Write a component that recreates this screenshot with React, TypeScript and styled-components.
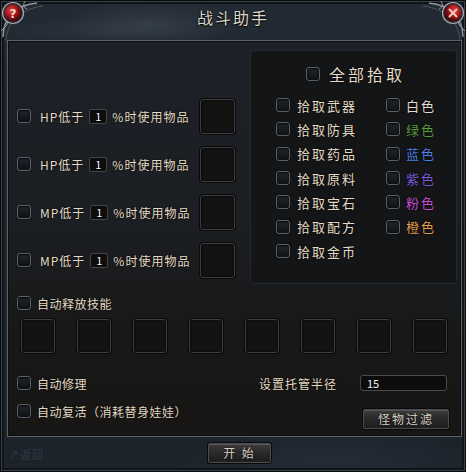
import { FC } from 'react';
import styled, { createGlobalStyle } from 'styled-components';

const GlobalStyle = createGlobalStyle`
  html, body {
    margin: 0;
    padding: 0;
    background: #0b0d10;
  }
  body {
    font-family: "Noto Sans CJK SC", "DejaVu Sans", sans-serif;
  }
`;

const TEXT = '#e4dac4';

const Styled = {
  Window: styled.div`
    position: relative;
    width: 466px;
    height: 472px;
    box-sizing: border-box;
    overflow: hidden;
    display: flex;
    flex-flow: column nowrap;
    background:
      radial-gradient(ellipse 90px 22px at 150px 22px, rgba(120, 135, 150, 0.18), transparent),
      radial-gradient(ellipse 120px 14px at 110px 30px, rgba(120, 135, 150, 0.1), transparent),
      radial-gradient(ellipse 160px 30px at 330px 460px, rgba(90, 105, 125, 0.12), transparent),
      linear-gradient(180deg, #222a33 0%, #1d242c 40%, #1c232b 100%);
    border: 1px solid #07090b;
    box-shadow: inset 0 0 0 1px #38404a, inset 0 0 0 3px #11151a;
  `,
  TitleBar: styled.div`
    height: 39px;
    display: flex;
    justify-content: center;
    align-items: flex-start;
    padding-top: 6px;
    box-sizing: border-box;
  `,
  Title: styled.h1`
    margin: 0;
    font-size: 16px;
    font-weight: normal;
    letter-spacing: 2px;
    color: #ddd6c8;
    line-height: 20px;
    text-shadow: 0 0 2px #000, 0 1px 1px #000;
  `,
  Corner: styled.div<{ side: 'left' | 'right' }>`
    position: absolute;
    top: 0;
    ${({ side }) => (side === 'left' ? 'left: 0;' : 'right: 0; transform: scaleX(-1);')}
    width: 44px;
    height: 44px;
    pointer-events: none;
  `,
  Panel: styled.div`
    margin: 0 3px 0 6px;
    height: 397px;
    box-sizing: border-box;
    border: 1px solid #5c636b;
    box-shadow: inset 0 0 0 1px #0c0e10;
    background: linear-gradient(180deg, #1d2229 0%, #1b1e22 45%, #181818 75%, #171615 100%);
    padding: 9px 4px 0 9px;
    display: flex;
    flex-flow: column nowrap;
  `,
  Top: styled.div`
    display: flex;
    justify-content: space-between;
    height: 234px;
  `,
  LeftCol: styled.div`
    width: 218px;
    padding-top: 42px;
    display: flex;
    flex-flow: column nowrap;
  `,
  PotionRow: styled.div`
    height: 48px;
    display: flex;
    align-items: center;
    font-size: 12px;
    letter-spacing: 1px;
    color: ${TEXT};
    text-shadow: 0 0 2px #000;
  `,
  Label: styled.span<{ gap?: number }>`
    margin-left: ${({ gap }) => gap ?? 0}px;
    white-space: nowrap;
  `,
  Check: styled.span`
    flex: none;
    width: 14px;
    height: 14px;
    box-sizing: border-box;
    border-radius: 3px;
    border: 1px solid #58606a;
    background: linear-gradient(180deg, #22272d 0%, #0f1114 100%);
    box-shadow: inset 0 1px 2px rgba(0, 0, 0, 0.9), 0 0 1px #000;
  `,
  NumBox: styled.span<{ width: number }>`
    width: ${({ width }) => width}px;
    height: 15px;
    box-sizing: border-box;
    margin-left: 5px;
    border: 1px solid #454545;
    border-radius: 2px;
    background: #0d0d0d;
    color: #f2f2f2;
    font-size: 11px;
    letter-spacing: 0;
    line-height: 13px;
    text-align: center;
  `,
  Slot: styled.span<{ size: number }>`
    flex: none;
    width: ${({ size }) => size}px;
    height: ${({ size }) => size}px;
    box-sizing: border-box;
    border: 1px solid #3e3d3b;
    border-radius: 3px;
    background: #131313;
    box-shadow: 0 0 0 1px #0a0a0a, inset 0 0 3px rgba(0, 0, 0, 0.8);
  `,
  PotionSlot: styled.span`
    margin-left: auto;
    display: flex;
  `,
  PickPanel: styled.div`
    width: 207px;
    box-sizing: border-box;
    border: 1px solid #25282c;
    border-radius: 4px;
    background: #141517;
    padding: 14px 0 0 25px;
    display: flex;
    flex-flow: column nowrap;
  `,
  PickAll: styled.div`
    display: flex;
    align-items: center;
    height: 18px;
    margin-left: 30px;
    font-size: 16px;
    letter-spacing: 3px;
    color: ${TEXT};
    text-shadow: 0 0 2px #000;
  `,
  PickGrid: styled.div`
    margin-top: 10px;
    display: grid;
    grid-template-columns: 110px auto;
    grid-auto-rows: 24.33px;
    align-items: center;
  `,
  PickItem: styled.div<{ color?: string }>`
    display: flex;
    align-items: center;
    font-size: 13px;
    letter-spacing: 2px;
    color: ${({ color }) => color ?? TEXT};
    text-shadow: 0 0 2px #000;
  `,
  SkillToggle: styled.div`
    margin-top: 12px;
    display: flex;
    align-items: center;
    height: 14px;
    font-size: 12px;
    letter-spacing: 0.5px;
    color: ${TEXT};
    text-shadow: 0 0 2px #000;
  `,
  SkillRow: styled.div`
    margin-top: 9px;
    padding-left: 4px;
    display: flex;
    gap: 22px;
  `,
  Bottom: styled.div`
    margin-top: 22px;
    display: flex;
    justify-content: space-between;
    padding-right: 8px;
  `,
  OptionCol: styled.div`
    display: flex;
    flex-flow: column nowrap;
    gap: 12px;
  `,
  Option: styled.div`
    display: flex;
    align-items: center;
    height: 16px;
    font-size: 12px;
    letter-spacing: 0.5px;
    color: ${TEXT};
    text-shadow: 0 0 2px #000;
  `,
  RadiusCol: styled.div`
    display: flex;
    flex-flow: column nowrap;
    align-items: flex-end;
  `,
  RadiusRow: styled.div`
    display: flex;
    align-items: center;
    height: 16px;
    margin-right: 2px;
    font-size: 12px;
    letter-spacing: 1px;
    color: ${TEXT};
    text-shadow: 0 0 2px #000;
  `,
  RadiusInput: styled.span`
    margin-left: 23px;
    width: 87px;
    height: 16px;
    box-sizing: border-box;
    border: 1px solid #4a4a4a;
    border-radius: 3px;
    background: #0d0d0d;
    color: #f4f4f4;
    font-size: 11px;
    letter-spacing: 0;
    line-height: 14px;
    padding-left: 6px;
  `,
  Button: styled.button<{ width: number }>`
    width: ${({ width }) => width}px;
    height: 20px;
    padding: 0;
    border: 1px solid #4d4d4d;
    border-radius: 2px;
    background: linear-gradient(180deg, #3d3d3d 0%, #2a2a2a 45%, #1d1d1d 100%);
    box-shadow: 0 0 0 1px #0a0a0a, inset 0 1px 0 #555;
    color: #d9d2c4;
    font-family: inherit;
    font-size: 12px;
    letter-spacing: 2px;
    line-height: 18px;
    text-shadow: 0 0 2px #000;
    cursor: pointer;
  `,
  FilterButton: styled.div`
    margin-top: 14px;
  `,
  Footer: styled.div`
    flex: 1;
    display: flex;
    align-items: flex-start;
    padding: 6px 0 0 7px;
  `,
  Faint: styled.span`
    width: 200px;
    margin-top: 3px;
    font-size: 11px;
    letter-spacing: 1px;
    color: #323a45;
  `,
};

const CornerOrnament: FC<{ kind: 'help' | 'close' }> = ({ kind }) => (
  <svg width="44" height="44" viewBox="0 0 44 44">
    <defs>
      <radialGradient id={`orb-${kind}`} cx="40%" cy="35%" r="65%">
        <stop offset="0%" stopColor="#e0484a" />
        <stop offset="55%" stopColor="#a01418" />
        <stop offset="100%" stopColor="#3e0406" />
      </radialGradient>
    </defs>
    <path d="M2 36 C2 18 14 4 36 2" fill="none" stroke="#8d949b" strokeWidth="1.5" />
    <path d="M5 40 C6 22 18 8 42 5" fill="none" stroke="#4c535a" strokeWidth="1" />
    <path d="M0 30 C4 26 6 24 8 20" fill="none" stroke="#9aa1a8" strokeWidth="1" />
    <path d="M24 0 C22 4 22 6 26 8" fill="none" stroke="#9aa1a8" strokeWidth="1" />
    <circle cx="12" cy="12" r="10.5" fill="#2a2e33" stroke="#a3aab0" strokeWidth="1.2" />
    <circle cx="12" cy="12" r="8.5" fill={`url(#orb-${kind})`} />
    {kind === 'help' ? (
      <text x="12" y="16.5" textAnchor="middle" fontSize="12" fontWeight="bold" fill="#f1d9d0" fontFamily="DejaVu Sans, sans-serif">
        ?
      </text>
    ) : (
      <g stroke="#f0c8c0" strokeWidth="2" strokeLinecap="round">
        <line x1="8.5" y1="8.5" x2="15.5" y2="15.5" />
        <line x1="15.5" y1="8.5" x2="8.5" y2="15.5" />
      </g>
    )}
  </svg>
);

const potions = ['HP', 'HP', 'MP', 'MP'];

const pickRows: { left: string; right?: string; color?: string }[] = [
  { left: '拾取武器', right: '白色', color: '#e4dccc' },
  { left: '拾取防具', right: '绿色', color: '#5c9a3c' },
  { left: '拾取药品', right: '蓝色', color: '#4b7fe0' },
  { left: '拾取原料', right: '紫色', color: '#7b5ad8' },
  { left: '拾取宝石', right: '粉色', color: '#c44fd0' },
  { left: '拾取配方', right: '橙色', color: '#e39a4e' },
  { left: '拾取金币' },
];

export default function App() {
  return (
    <>
      <GlobalStyle />
      <Styled.Window>
        <Styled.TitleBar>
          <Styled.Title>战斗助手</Styled.Title>
        </Styled.TitleBar>
        <Styled.Corner side="left">
          <CornerOrnament kind="help" />
        </Styled.Corner>
        <Styled.Corner side="right">
          <CornerOrnament kind="close" />
        </Styled.Corner>

        <Styled.Panel>
          <Styled.Top>
            <Styled.LeftCol>
              {potions.map((p, i) => (
                <Styled.PotionRow key={i}>
                  <Styled.Check />
                  <Styled.Label gap={9}>{p}低于</Styled.Label>
                  <Styled.NumBox width={18}>1</Styled.NumBox>
                  <Styled.Label gap={5}>%时使用物品</Styled.Label>
                  <Styled.PotionSlot>
                    <Styled.Slot size={35} />
                  </Styled.PotionSlot>
                </Styled.PotionRow>
              ))}
            </Styled.LeftCol>

            <Styled.PickPanel>
              <Styled.PickAll>
                <Styled.Check />
                <Styled.Label gap={9}>全部拾取</Styled.Label>
              </Styled.PickAll>
              <Styled.PickGrid>
                {pickRows.flatMap((r) => [
                  <Styled.PickItem key={r.left}>
                    <Styled.Check />
                    <Styled.Label gap={7}>{r.left}</Styled.Label>
                  </Styled.PickItem>,
                  <Styled.PickItem key={`${r.left}-c`} color={r.color}>
                    {r.right && (
                      <>
                        <Styled.Check />
                        <Styled.Label gap={6}>{r.right}</Styled.Label>
                      </>
                    )}
                  </Styled.PickItem>,
                ])}
              </Styled.PickGrid>
            </Styled.PickPanel>
          </Styled.Top>

          <Styled.SkillToggle>
            <Styled.Check />
            <Styled.Label gap={6}>自动释放技能</Styled.Label>
          </Styled.SkillToggle>
          <Styled.SkillRow>
            {Array.from({ length: 8 }).map((_, i) => (
              <Styled.Slot key={i} size={34} />
            ))}
          </Styled.SkillRow>

          <Styled.Bottom>
            <Styled.OptionCol>
              <Styled.Option>
                <Styled.Check />
                <Styled.Label gap={6}>自动修理</Styled.Label>
              </Styled.Option>
              <Styled.Option>
                <Styled.Check />
                <Styled.Label gap={6}>自动复活（消耗替身娃娃）</Styled.Label>
              </Styled.Option>
            </Styled.OptionCol>
            <Styled.RadiusCol>
              <Styled.RadiusRow>
                设置托管半径
                <Styled.RadiusInput>15</Styled.RadiusInput>
              </Styled.RadiusRow>
              <Styled.FilterButton>
                <Styled.Button width={86}>怪物过滤</Styled.Button>
              </Styled.FilterButton>
            </Styled.RadiusCol>
          </Styled.Bottom>
        </Styled.Panel>

        <Styled.Footer>
          <Styled.Faint>↗返回</Styled.Faint>
          <Styled.Button width={63}>开 始</Styled.Button>
        </Styled.Footer>
      </Styled.Window>
    </>
  );
}
